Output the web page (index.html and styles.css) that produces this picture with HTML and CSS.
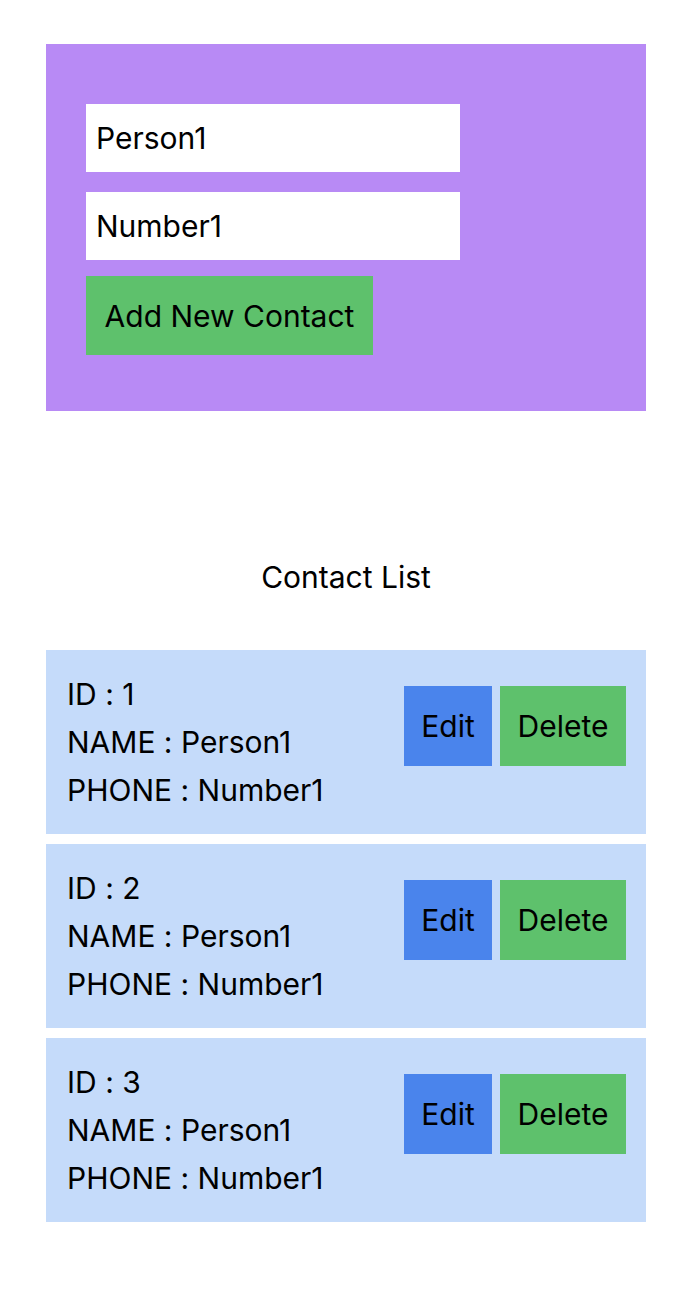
FILE: index.html
```html
<!DOCTYPE html>
<html>
<head>
<meta charset="utf-8">
<link rel="stylesheet" href="styles.css">
</head>
<body>
<div class="page">
  <form class="form">
    <input class="field" type="text" value="Person1">
    <input class="field" type="text" value="Number1">
    <button type="button" class="btn btn-green">Add New Contact</button>
  </form>
  <h2 class="title">Contact List</h2>
  <div class="list">
    <div class="card">
      <div class="info">
        <div>ID : 1</div>
        <div>NAME : Person1</div>
        <div>PHONE : Number1</div>
      </div>
      <div class="actions">
        <button class="btn btn-blue">Edit</button>
        <button class="btn btn-green">Delete</button>
      </div>
    </div>
    <div class="card">
      <div class="info">
        <div>ID : 2</div>
        <div>NAME : Person1</div>
        <div>PHONE : Number1</div>
      </div>
      <div class="actions">
        <button class="btn btn-blue">Edit</button>
        <button class="btn btn-green">Delete</button>
      </div>
    </div>
    <div class="card">
      <div class="info">
        <div>ID : 3</div>
        <div>NAME : Person1</div>
        <div>PHONE : Number1</div>
      </div>
      <div class="actions">
        <button class="btn btn-blue">Edit</button>
        <button class="btn btn-green">Delete</button>
      </div>
    </div>
  </div>
</div>
</body>
</html>
```
FILE: styles.css
```css
* { box-sizing: border-box; }
body {
  margin: 0;
  background: #fff;
  font-family: Inter, "Liberation Sans", sans-serif;
  font-feature-settings: "calt" 0;
  color: #000;
}
.page {
  width: 600px;
  margin: 44px 0 0 46px;
}
.form {
  background: #b88af5;
  padding: 60px 40px 56px;
  display: flex;
  flex-direction: column;
  align-items: flex-start;
}
.field {
  width: 374px;
  height: 68px;
  border: none;
  outline: none;
  padding: 0 10px;
  font-family: inherit;
  font-feature-settings: "calt" 0;
  font-size: 30px;
  color: #000;
  background: #fff;
  margin-bottom: 20px;
}
.field + .field { margin-bottom: 16px; }
.btn {
  border: none;
  font-family: inherit;
  font-feature-settings: "calt" 0;
  font-size: 30px;
  color: #000;
  height: 80px;
  padding: 0 17px;
  margin: 0;
  cursor: pointer;
}
.form .btn { height: 79px; width: 287px; padding: 0; }
.btn-green { background: #5ec16c; }
.btn-blue { background: #4a84ec; }
.title {
  margin: 141px 0 48px;
  text-align: center;
  font-weight: normal;
  font-size: 30px;
  line-height: 50px;
}
.list {
  display: flex;
  flex-direction: column;
  gap: 10px;
}
.card {
  background: #c5dbfa;
  height: 184px;
  padding: 20px 20px 20px 21px;
  display: flex;
  justify-content: space-between;
  align-items: flex-start;
}
.info {
  font-size: 30px;
  line-height: 48px;
}
.actions {
  display: flex;
  gap: 8px;
  margin-top: 16px;
}
.actions .btn-blue { width: 88px; padding: 0; }
.actions .btn-green { width: 126px; padding: 0; }
```
